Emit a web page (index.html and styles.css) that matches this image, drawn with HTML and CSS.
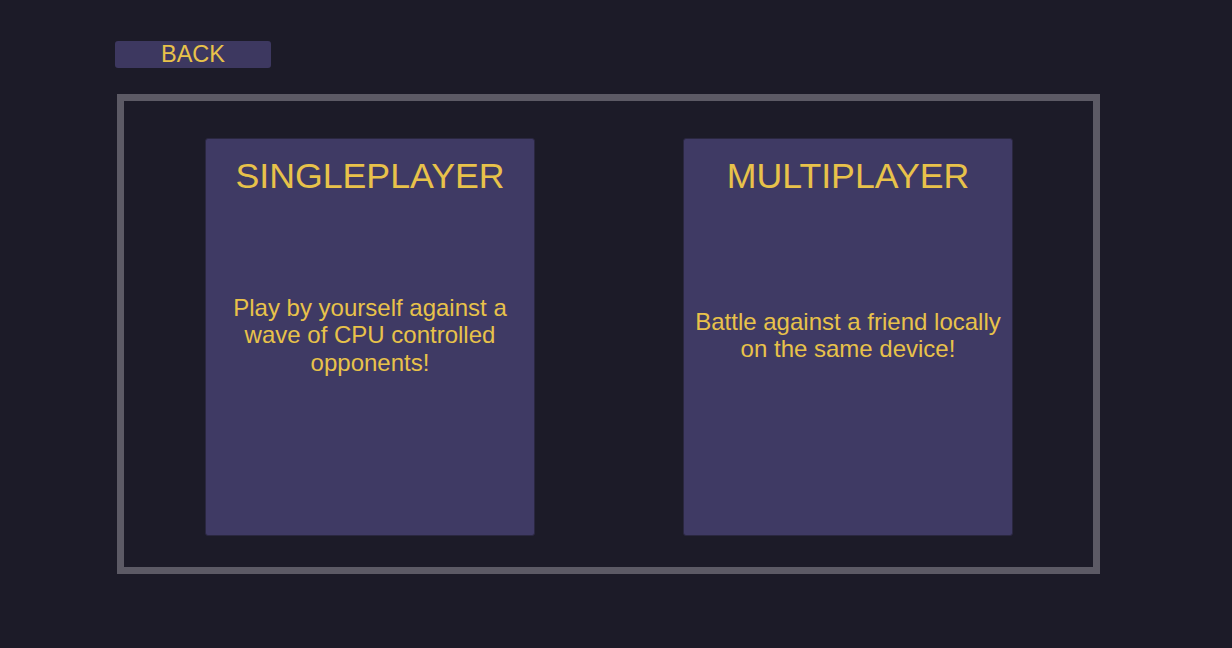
FILE: index.html
```html
<!DOCTYPE html>
<html>
<head>
<meta charset="utf-8">
<link rel="stylesheet" href="styles.css">
</head>
<body>
<div class="page">
  <div class="topbar">
    <button class="back">BACK</button>
  </div>
  <div class="frame">
    <div class="card">
      <div class="title">SINGLEPLAYER</div>
      <div class="desc">Play by yourself against a wave of CPU controlled opponents!</div>
    </div>
    <div class="card">
      <div class="title">MULTIPLAYER</div>
      <div class="desc">Battle against a friend locally on the same device!</div>
    </div>
  </div>
</div>
</body>
</html>
```
FILE: styles.css
```css
html, body {
  margin: 0;
  padding: 0;
  background: #1c1b28;
  width: 1232px;
  height: 648px;
  overflow: hidden;
  font-family: "Liberation Sans", Arial, sans-serif;
  color: #e8c24a;
}
.page {
  padding: 41px 0 0 115px;
}
.topbar {
  display: flex;
  height: 27px;
}
.back {
  width: 156px;
  height: 27px;
  background: #3d3860;
  border: none;
  border-radius: 3px;
  color: #e8c24a;
  font-family: "Liberation Sans", Arial, sans-serif;
  font-size: 23.5px;
  line-height: 27px;
  padding: 0;
  text-align: center;
}
.frame {
  margin: 26px 0 0 2px;
  width: 888px;
  border: 7px solid #5c5a65;
  display: flex;
  justify-content: flex-start;
  align-items: flex-start;
  gap: 148px;
  padding: 37px 0 0 81px;
  box-sizing: content-box;
  height: 429px;
}
.card {
  width: 328px;
  height: 396px;
  background: #3f3a64;
  border: 1px solid #2a2740;
  border-radius: 3px;
  position: relative;
  display: flex;
  align-items: center;
  justify-content: center;
}
.title {
  position: absolute;
  top: 16px;
  left: 0;
  right: 0;
  text-align: center;
  font-size: 35.7px;
  line-height: 42px;
}
.desc {
  text-align: center;
  font-size: 24px;
  line-height: 27.5px;
  padding: 0 10px 4px;
}
```
